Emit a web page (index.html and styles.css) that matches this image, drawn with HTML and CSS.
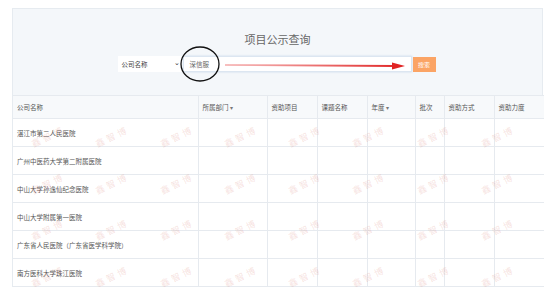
FILE: index.html
```html
<!DOCTYPE html>
<html lang="zh-CN">
<head>
  <meta charset="UTF-8">
  <title>项目公示查询</title>
  <link rel="stylesheet" href="styles.css">
</head>
<body>
  <div class="panel">
    <div class="search-area">
      <h1>项目公示查询</h1>
      <div class="search-row">
        <div class="select">公司名称 <span class="chev">&#8964;</span></div>
        <div class="input">深信服</div>
        <button class="btn">搜索</button>

        <!-- annotation drawn over the search box -->
        <svg class="mark" width="320" height="40" viewBox="0 0 320 40">
          <defs>
            <linearGradient id="arrowGrad" gradientUnits="userSpaceOnUse" x1="107" y1="0" x2="285" y2="0">
              <stop offset="0" stop-color="#f7c0c0"/>
              <stop offset="1" stop-color="#e02424"/>
            </linearGradient>
          </defs>
          <ellipse cx="82" cy="20" rx="19" ry="17" fill="none" stroke="#111" stroke-width="1.3"/>
          <path d="M107 21 L278 22" stroke="url(#arrowGrad)" stroke-width="1.8" fill="none"/>
          <path d="M274 18.5 L287 22 L274 25.5 Z" fill="#e02424"/>
        </svg>
      </div>
    </div>

    <div class="table-wrap">
      <table class="grid">
        <colgroup>
          <col style="width:185px"><col style="width:69px"><col style="width:50px"><col style="width:50px">
          <col style="width:48px"><col style="width:29px"><col style="width:50px"><col style="width:50px">
        </colgroup>
        <thead>
          <tr>
            <th>公司名称</th>
            <th>所属部门 <span class="caret">&#9662;</span></th>
            <th>资助项目</th>
            <th>课题名称</th>
            <th>年度 <span class="caret">&#9662;</span></th>
            <th>批次</th>
            <th>资助方式</th>
            <th>资助力度</th>
          </tr>
        </thead>
        <tbody id="rows"></tbody>
      </table>
      <div class="watermarks" id="wm"></div>
    </div>
  </div>

  <script>
    const names = [
      '湛江市第二人民医院',
      '广州中医药大学第二附属医院',
      '中山大学孙逸仙纪念医院',
      '中山大学附属第一医院',
      '广东省人民医院（广东省医学科学院）',
      '南方医科大学珠江医院'
    ];
    const tbody = document.getElementById('rows');
    names.forEach(n => {
      const tr = document.createElement('tr');
      tr.innerHTML = '<td>' + n + '</td>' + '<td></td>'.repeat(7);
      tbody.appendChild(tr);
    });

    // watermark tiles over the table body
    const wm = document.getElementById('wm');
    for (let i = 0; i < 32; i++) {
      const s = document.createElement('span');
      s.textContent = '鑫智博';
      wm.appendChild(s);
    }
  </script>
</body>
</html>
```

FILE: styles.css
```css
body { margin: 0; background: #fff; font-family: "Noto Sans CJK SC", "Noto Sans", sans-serif; color: #555; }
.panel { margin: 8px 11px 0 12px; background: #f4f7fa; border: 1px solid #e6ebf0; border-bottom: none; }
.search-area { height: 86px; display: flex; flex-direction: column; align-items: center; }
h1 { margin: 23px 0 0; font-size: 11px; font-weight: normal; color: #666; line-height: 14px; }
.search-row { position: relative; margin-top: 10px; display: flex; align-items: center; margin-left: -2px; }
.select { width: 58px; height: 16px; background: #fff; font-size: 6.5px; color: #444; display: flex; align-items: center; justify-content: space-between; padding: 0 3px 0 4px; }
.chev { font-size: 7px; color: #333; margin-top: -4px; }
.input { width: 221px; height: 14px; background: #fff; border: 1px solid #dce6f1; box-shadow: 0 0 2px rgba(120,160,210,0.35); font-size: 6.5px; color: #666; display: flex; align-items: center; padding-left: 6px; }
.btn { width: 23px; height: 15px; margin-left: 1px; border: none; background: #fba465; color: #fff; font-family: inherit; font-size: 6px; padding: 0; }
.mark { position: absolute; left: 0; top: -12px; pointer-events: none; overflow: visible; }

.table-wrap { position: relative; }
.grid { width: 100%; border-collapse: collapse; table-layout: fixed; font-size: 6.5px; }
.grid th, .grid td { border: 1px solid #e6eaef; text-align: left; padding: 0 4px; white-space: nowrap; overflow: hidden; }
.grid th { height: 22px; background: #f7f9fb; font-weight: normal; color: #555; }
.grid td { height: 27px; background: #fff; color: #555; }
.grid tr > :first-child { border-left: none; }
.grid tr > :last-child { border-right: none; }
.caret { font-size: 6px; color: #777; }

.watermarks { position: absolute; left: 3px; top: 18px; display: grid; grid-template-columns: repeat(8, 64.3px); grid-auto-rows: 46.7px; pointer-events: none; }
.watermarks span { display: flex; align-items: center; justify-content: center; font-size: 9px; letter-spacing: 3px; color: rgba(215, 120, 110, 0.22); transform: rotate(-26deg); }
```
